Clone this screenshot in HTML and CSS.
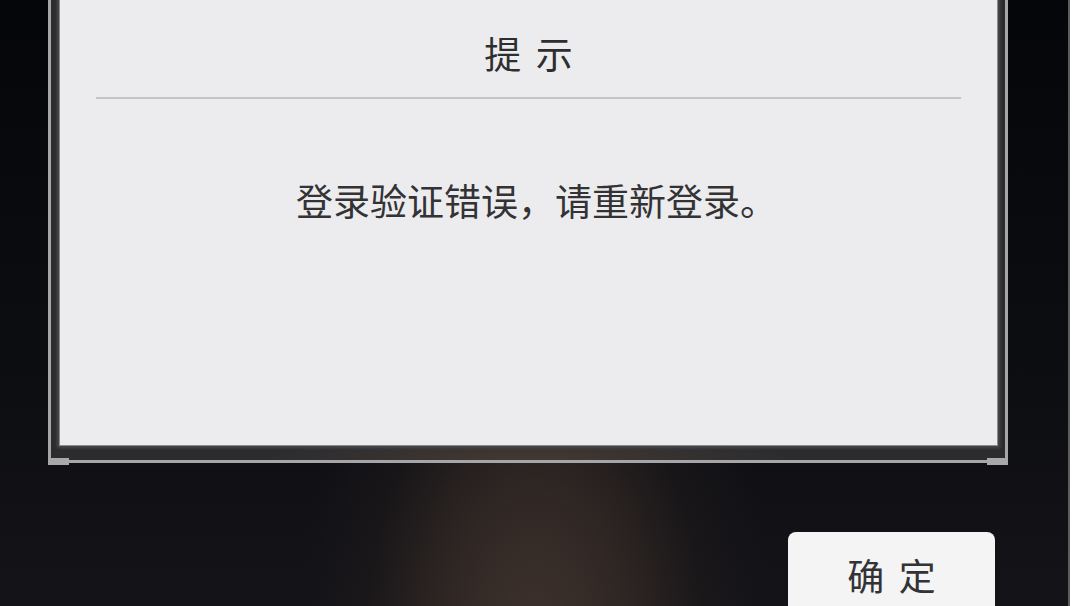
FILE: index.html
```html
<!DOCTYPE html>
<html lang="zh-CN">
<head>
<meta charset="utf-8">
<title>提示</title>
<link rel="stylesheet" href="styles.css">
</head>
<body>
<div class="screen">
  <div class="stage">
    <div class="frame">
      <div class="bezel">
        <div class="panel">
          <div class="title">提 示</div>
          <div class="rule"></div>
          <div class="message">登录验证错误，请重新登录。</div>
        </div>
      </div>
    </div>
    <div class="actions">
      <button class="btn" type="button">确 定</button>
    </div>
  </div>
  <div class="edge"></div>
</div>
</body>
</html>
```

FILE: styles.css
```css
html, body {
  margin: 0;
  padding: 0;
  width: 1080px;
  height: 606px;
  overflow: hidden;
  font-family: "Noto Sans CJK SC", "Noto Sans", sans-serif;
}

.screen {
  display: flex;
  width: 1080px;
  height: 606px;
}

.stage {
  width: 1068px;
  height: 606px;
  display: flex;
  flex-direction: column;
  overflow: hidden;
  background:
    radial-gradient(ellipse 240px 420px at 535px 640px, rgba(62, 50, 44, 1) 0%, rgba(56, 45, 40, 0.8) 35%, rgba(40, 32, 30, 0.35) 70%, rgba(20, 18, 22, 0) 100%),
    linear-gradient(180deg, #05060a 0%, #0b0c10 50%, #131318 100%);
}

.edge {
  flex: 1;
  background: #ffffff;
  border-left: 2px solid #5c5c5e;
}

.frame {
  position: relative;
  margin-left: 48px;
  width: 954px;
  height: 460px;
  border: 3px solid #a6a6a8;
  border-top: none;
  flex: none;
}

.frame::before,
.frame::after {
  content: "";
  position: absolute;
  bottom: -5px;
  width: 21px;
  height: 7px;
  background: #a8a8aa;
}

.frame::before { left: -3px; }
.frame::after { right: -3px; }

.bezel {
  height: 449px;
  padding: 0 8px 11px 9px;
  background:
    radial-gradient(ellipse 260px 30px at 50% 100%, rgba(70, 58, 50, 0.9) 0%, rgba(70, 58, 50, 0) 100%),
    #2c2c2f;
}

.panel {
  height: 445px;
  background: #ececee;
  box-shadow: 0 0 0 1px #8a8a8c, 0 0 3px 3px #4a4a4d;
  display: flex;
  flex-direction: column;
}

.title {
  padding-top: 13px;
  height: 83px;
  line-height: 80px;
  text-align: center;
  font-size: 37px;
  letter-spacing: 3px;
  padding-left: 3px;
  color: #2e2e30;
}

.rule {
  height: 2px;
  margin: 1px 36px 0;
  background: #c4c4c6;
}

.message {
  margin-top: 81px;
  line-height: 40px;
  padding-left: 16px;
  text-align: center;
  font-size: 37px;
  color: #333335;
}

.actions {
  margin-top: 69px;
  padding-left: 788px;
  flex: none;
}

.btn {
  box-sizing: border-box;
  width: 207px;
  height: 100px;
  border: none;
  border-radius: 8px;
  background: #f4f4f5;
  padding: 0 0 14px 3px;
  display: block;
  text-align: center;
  font-family: "Noto Sans CJK SC", "Noto Sans", sans-serif;
  font-size: 37px;
  letter-spacing: 3px;
  line-height: 44px;
  color: #333335;
}
```
